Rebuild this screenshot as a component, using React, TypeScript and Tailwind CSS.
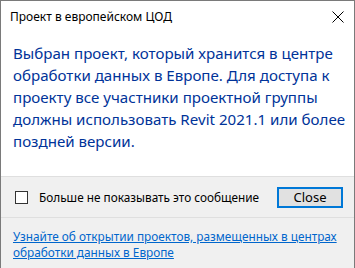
import React from "react";

export default function App() {
  return (
    <div
      className="w-[355px] h-[268px] flex flex-col border-l border-r border-t border-[#7a7a7a] bg-white overflow-hidden"
      style={{ fontFamily: '"Noto Sans", sans-serif' }}
    >
      <div className="h-[32px] flex items-center justify-between pl-[9px] pr-[9px] shrink-0">
        <span className="text-[12px] text-black leading-none">Проект в европейском ЦОД</span>
        <svg width="12" height="12" viewBox="0 0 12 12" className="mr-[1px]">
          <path d="M0.5 0.5 L11.5 11.5 M11.5 0.5 L0.5 11.5" stroke="#000" strokeWidth="1" />
        </svg>
      </div>
      <div className="flex-1 bg-white pl-[12px] pr-[6px] pt-[9px]">
        <p className="text-[15.1px] leading-[22px] text-[#003399]">
          Выбран проект, который хранится в центре обработки данных в Европе. Для доступа к проекту все участники проектной группы должны использовать Revit 2021.1 или более поздней версии.
        </p>
      </div>
      <div className="h-[92px] shrink-0 bg-[#f0f0f0] border-t border-[#dfdfdf] flex flex-col">
        <div className="h-[41px] flex items-center justify-between pl-[14px] pr-[11px] border-b border-[#dfdfdf] pt-[1px]">
          <div className="flex items-center min-w-0">
            <div className="w-[13px] h-[13px] border border-[#333333] bg-white shrink-0" />
            <span className="ml-[11px] text-[11.8px] text-black whitespace-nowrap">Больше не показывать это сообщение</span>
          </div>
          <button className="w-[66px] h-[21px] shrink-0 bg-[#e1e1e1] border-2 border-[#0078d7] text-[13px] text-black flex items-center justify-center leading-none">
            Close
          </button>
        </div>
        <div className="pl-[12px] pt-[10px]">
          <a className="text-[11.8px] leading-[16px] text-[#0066cc] underline block">
            Узнайте об открытии проектов, размещенных в центрах обработки данных в Европе
          </a>
        </div>
      </div>
    </div>
  );
}
